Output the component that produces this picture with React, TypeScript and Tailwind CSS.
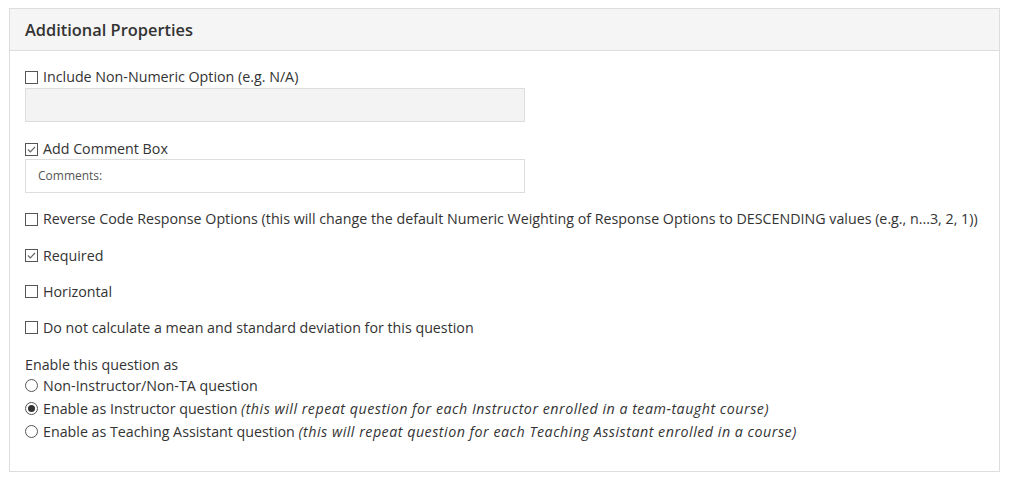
import React from "react";

function Pole({ zaznaczone }: { zaznaczone?: boolean }) {
  return (
    <span className="inline-flex h-[13px] w-[13px] shrink-0 items-center justify-center border border-[#555] bg-white">
      {zaznaczone ? (
        <svg viewBox="0 0 11 11" className="h-[11px] w-[11px]">
          <path d="M2 5.5 L4.3 7.8 L9 3" fill="none" stroke="#666" strokeWidth="1.2" />
        </svg>
      ) : null}
    </span>
  );
}

function Radio({ zaznaczone }: { zaznaczone?: boolean }) {
  return (
    <span className="inline-flex h-[13px] w-[13px] shrink-0 items-center justify-center rounded-full border border-[#555] bg-white">
      {zaznaczone ? <span className="h-[7px] w-[7px] rounded-full bg-[#333]" /> : null}
    </span>
  );
}

function Wiersz({ zaznaczone, children }: { zaznaczone?: boolean; children: React.ReactNode }) {
  return (
    <label className="flex h-5 items-center gap-[5px]">
      <Pole zaznaczone={zaznaczone} />
      <span>{children}</span>
    </label>
  );
}

function WierszRadio({ zaznaczone, children }: { zaznaczone?: boolean; children: React.ReactNode }) {
  return (
    <label className="flex h-5 items-center gap-[5px]">
      <Radio zaznaczone={zaznaczone} />
      <span>{children}</span>
    </label>
  );
}

export default function App() {
  return (
    <div
      className="min-h-[481px] bg-white pl-[9px] pt-[8px] text-[14.25px] text-[#333]"
      style={{ fontFamily: '"Open Sans", "Noto Sans", sans-serif' }}
    >
      <section className="h-[464px] w-[991px] border border-[#ddd]">
        <div className="flex h-[42px] items-center border-b border-[#ddd] bg-[#f5f5f5] px-[15px] pt-[1px]">
          <h2 className="text-[16.4px] font-semibold text-[#333]">Additional Properties</h2>
        </div>

        <div className="px-[15px] pt-[16px]">
          <Wiersz>Include Non-Numeric Option (e.g. N/A)</Wiersz>
          <div className="mt-[1px] h-[34px] w-[500px] border border-[#ddd] bg-[#f3f3f3]" />

          <div className="mt-[17px]">
            <Wiersz zaznaczone>Add Comment Box</Wiersz>
          </div>
          <div className="flex h-[34px] w-[500px] items-center border border-[#ddd] bg-white px-[12px] text-[12px] text-[#555]">
            Comments:
          </div>

          <div className="mt-[16px] flex flex-col gap-[16.3px]">
            <Wiersz>
              Reverse Code Response Options (this will change the default Numeric Weighting of Response Options to
              DESCENDING values (e.g., n...3, 2, 1))
            </Wiersz>
            <Wiersz zaznaczone>Required</Wiersz>
            <Wiersz>Horizontal</Wiersz>
            <Wiersz>Do not calculate a mean and standard deviation for this question</Wiersz>
          </div>

          <p className="mt-[17px] leading-5">Enable this question as</p>
          <div className="mt-[1px] flex flex-col gap-[3px]">
            <WierszRadio>Non-Instructor/Non-TA question</WierszRadio>
            <WierszRadio zaznaczone>
              Enable as Instructor question{" "}
              <em className="tracking-[0.5px]">
                (this will repeat question for each Instructor enrolled in a team-taught course)
              </em>
            </WierszRadio>
            <WierszRadio>
              Enable as Teaching Assistant question{" "}
              <em className="tracking-[0.5px]">
                (this will repeat question for each Teaching Assistant enrolled in a course)
              </em>
            </WierszRadio>
          </div>
        </div>
      </section>
    </div>
  );
}
